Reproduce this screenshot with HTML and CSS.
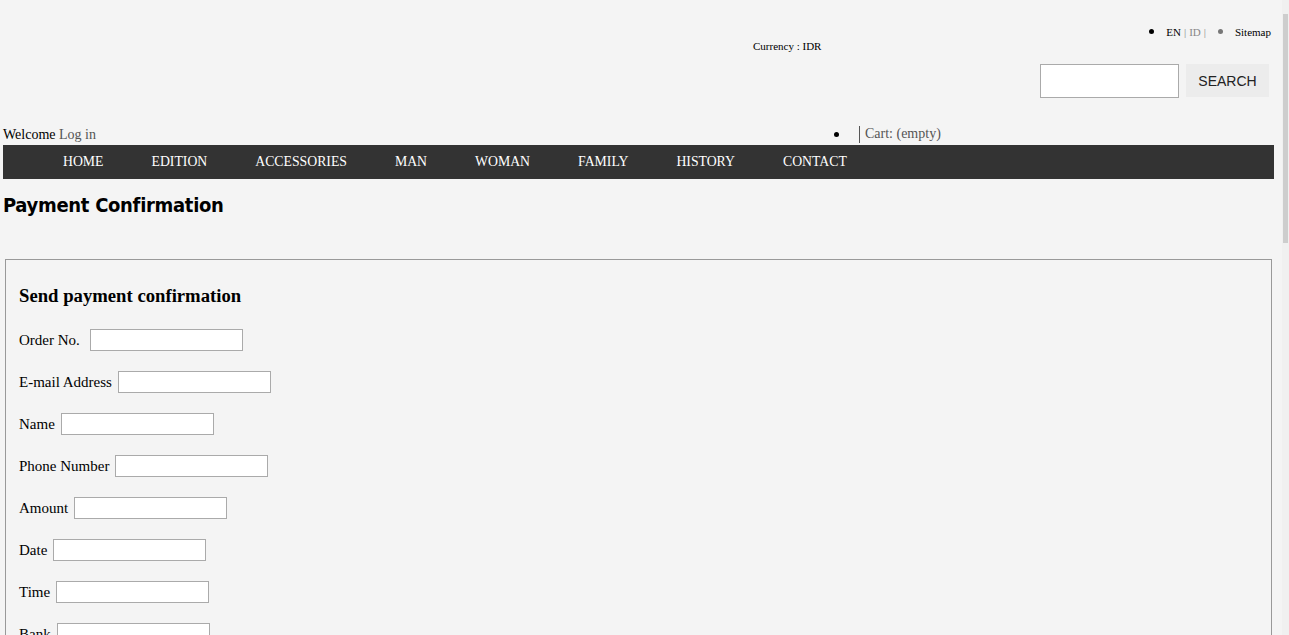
FILE: index.html
```html
<!DOCTYPE html>
<html lang="en">

<head>
  <meta charset="UTF-8">
  <title>Payment Confirmation</title>
  <link rel="stylesheet" href="styles.css">
</head>

<body>
  <div class="page">
    <div class="header">
      <div class="lang-bar">
        <ul>
          <li class="dot"></li>
          <li><span class="cur">EN</span><span class="sep">|</span><span class="sep">ID</span><span class="sep">|</span></li>
          <li class="dot grey"></li>
          <li>Sitemap</li>
        </ul>
      </div>
      <div class="currency">Currency : IDR</div>
      <div class="search-bar">
        <input type="text" class="search-input">
        <button class="search-btn">SEARCH</button>
      </div>
      <div class="user-bar">
        <div class="welcome">Welcome <a href="#">Log in</a></div>
        <ul class="cart">
          <li class="dot"></li>
          <li class="cart-link"><a href="#">Cart: (empty)</a></li>
        </ul>
      </div>
    </div>

    <div class="nav">
      <ul>
        <li><a href="#">HOME</a></li>
        <li><a href="#">EDITION</a></li>
        <li><a href="#">ACCESSORIES</a></li>
        <li><a href="#">MAN</a></li>
        <li><a href="#">WOMAN</a></li>
        <li><a href="#">FAMILY</a></li>
        <li><a href="#">HISTORY</a></li>
        <li><a href="#">CONTACT</a></li>
      </ul>
    </div>

    <h1 class="title">Payment Confirmation</h1>

    <div class="form-box">
      <h3>Send payment confirmation</h3>
      <div class="row"><label>Order No.&nbsp;</label><input type="text"></div>
      <div class="row"><label>E-mail Address</label><input type="text"></div>
      <div class="row"><label>Name</label><input type="text"></div>
      <div class="row"><label>Phone Number</label><input type="text"></div>
      <div class="row"><label>Amount</label><input type="text"></div>
      <div class="row"><label>Date</label><input type="text"></div>
      <div class="row"><label>Time</label><input type="text"></div>
      <div class="row"><label>Bank</label><input type="text"></div>
      <div class="row"><label>Account Name</label><input type="text"></div>
    </div>
  </div>

  <div class="scrollbar">
    <div class="thumb"></div>
  </div>
</body>

</html>
```

FILE: styles.css
```css
* {
  margin: 0;
  padding: 0;
  box-sizing: border-box;
}

html {
  overflow: hidden;
}

body {
  background-color: #f4f4f4;
  font-family: "Liberation Serif", "Times New Roman", serif;
  color: #000;
}

ul {
  list-style: none;
}

a {
  color: #555;
  text-decoration: none;
}

.page {
  width: 1271px;
  margin-left: 3px;
}

.dot {
  width: 5px;
  height: 5px;
  border-radius: 50%;
  background-color: #000;
}

/* header */
.lang-bar {
  display: flex;
  justify-content: flex-end;
  padding-top: 24px;
  padding-right: 3px;
  height: 39px;
  font-size: 11px;
  line-height: 14px;
}

.lang-bar ul {
  display: flex;
  align-items: center;
}

.lang-bar .dot {
  margin-right: 12px;
}

.lang-bar .dot.grey {
  background-color: #777;
  margin-left: 12px;
  margin-right: 12px;
}

.lang-bar .cur {
  color: #000;
}

.lang-bar .sep {
  color: #888;
  margin-left: 3px;
}

.currency {
  padding-left: 750px;
  font-size: 11px;
  line-height: 14px;
  height: 14px;
}

.search-bar {
  display: flex;
  justify-content: flex-end;
  gap: 7px;
  margin-top: 11px;
  padding-right: 5px;
}

.search-input {
  width: 139px;
  height: 34px;
  border: 1px solid #aaa;
  background-color: #fff;
}

.search-btn {
  width: 83px;
  height: 33px;
  border: none;
  background-color: #ececec;
  font-family: "Liberation Sans", Arial, sans-serif;
  font-size: 14px;
  color: #222;
}

.user-bar {
  display: flex;
  margin-top: 28px;
  height: 19px;
  font-size: 14px;
  line-height: 18px;
}

.welcome {
  width: 831px;
}

.cart {
  display: flex;
}

.cart .dot {
  margin-top: 6px;
  margin-right: 20px;
}

.cart-link {
  border-left: 1px solid #555;
  padding-left: 5px;
  line-height: 16px;
  height: 17px;
}

/* nav */
.nav {
  background-color: #333;
  height: 34px;
}

.nav ul {
  display: flex;
  padding-left: 36px;
}

.nav li a {
  display: block;
  padding: 0 24px;
  line-height: 34px;
  font-size: 13.75px;
  color: #fff;
}

.title {
  margin-top: 14px;
  font-family: "DejaVu Sans Condensed", "DejaVu Sans", sans-serif;
  font-stretch: condensed;
  font-size: 20px;
  line-height: 24px;
  letter-spacing: -0.3px;
}

/* form */
.form-box {
  margin-top: 42px;
  margin-left: 2px;
  width: 1267px;
  border: 1px solid #999;
  padding: 25px 13px;
}

.form-box h3 {
  font-size: 18.7px;
  line-height: 22px;
  margin-bottom: 22px;
}

.row {
  display: flex;
  align-items: center;
  gap: 6px;
  height: 22px;
  margin-bottom: 20px;
  font-size: 15px;
}

.row input {
  width: 153px;
  height: 22px;
  border: 1px solid #aaa;
  background-color: #fff;
}

/* fake scrollbar */
.scrollbar {
  position: fixed;
  top: 0;
  right: 0;
  width: 7px;
  height: 100%;
  background-color: #f0f0f0;
  padding-top: 14px;
}

.thumb {
  width: 5px;
  height: 229px;
  margin-left: 1px;
  background-color: #cdcdcd;
}
```
